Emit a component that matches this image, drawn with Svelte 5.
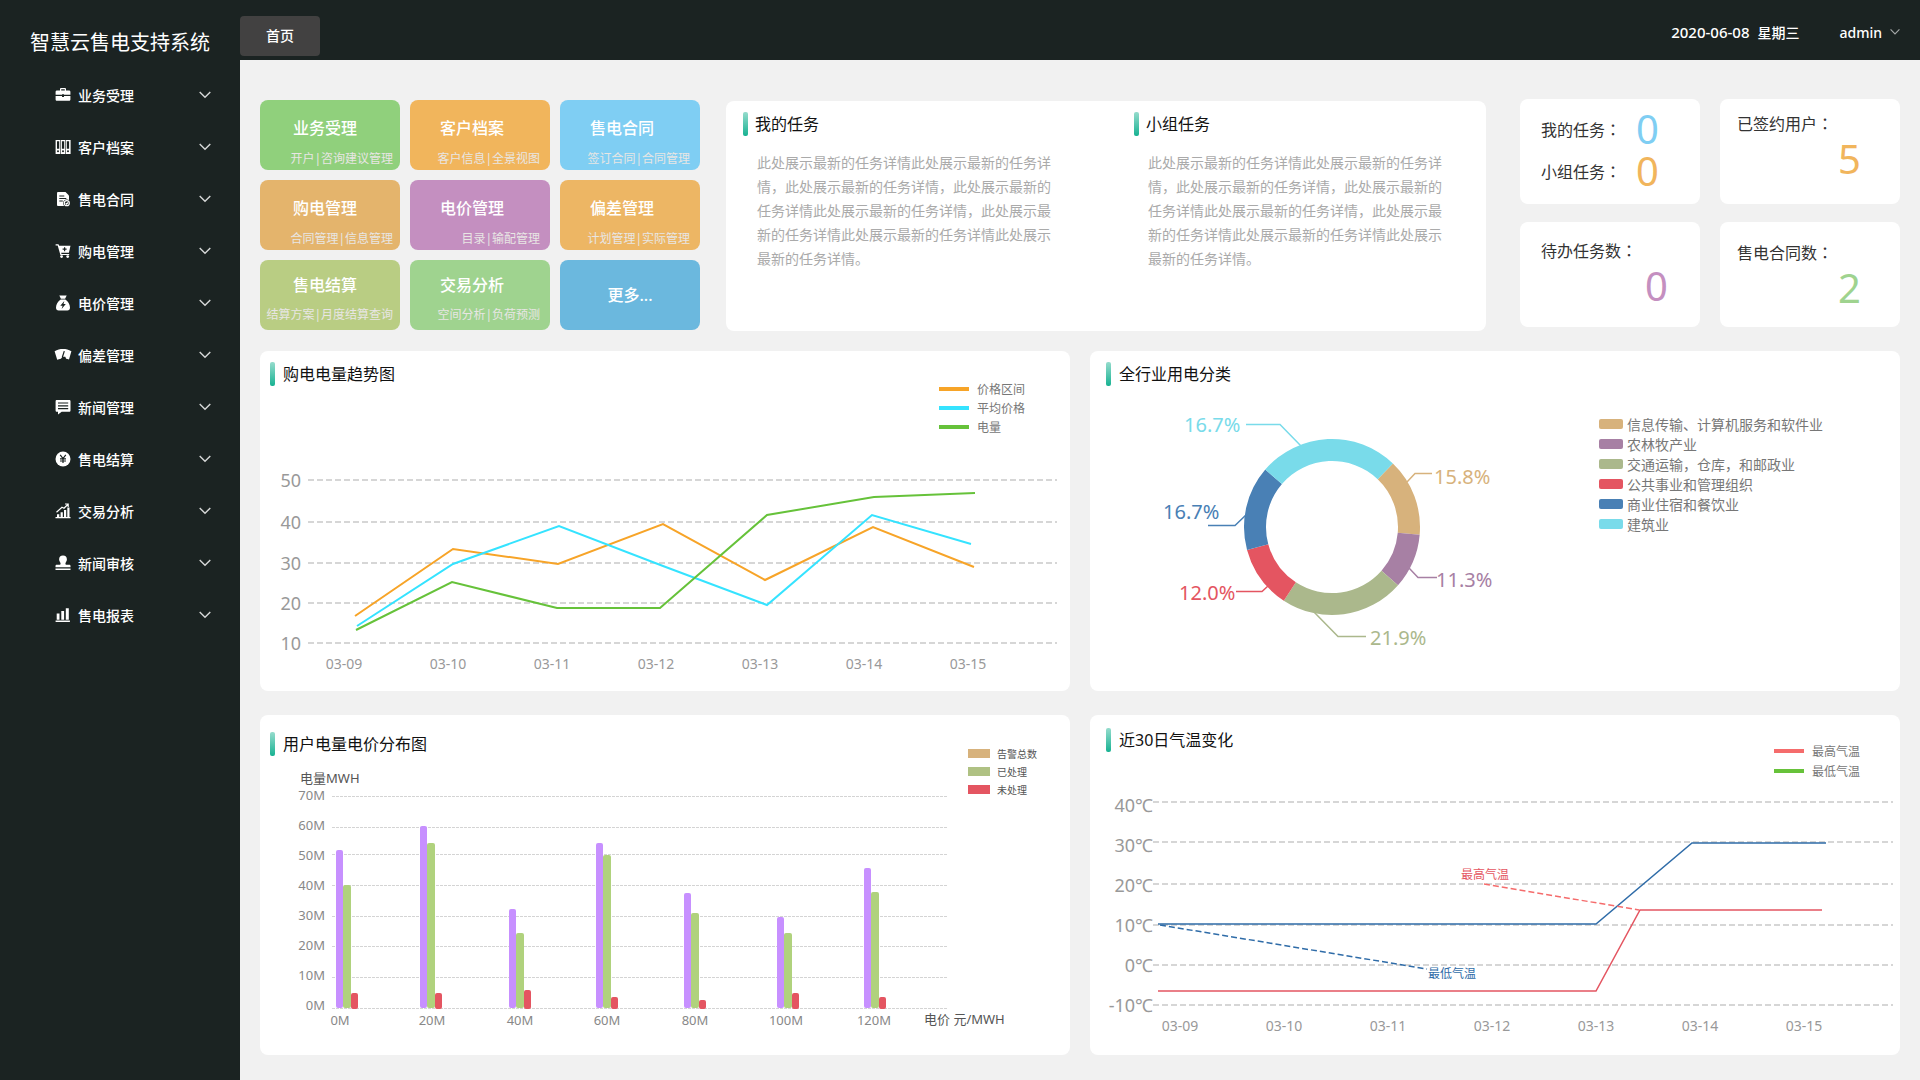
<script>
  const menu = [
    { icon: 'briefcase', label: '业务受理' },
    { icon: 'binders', label: '客户档案' },
    { icon: 'contract', label: '售电合同' },
    { icon: 'cart', label: '购电管理' },
    { icon: 'bag', label: '电价管理' },
    { icon: 'gauge', label: '偏差管理' },
    { icon: 'news', label: '新闻管理' },
    { icon: 'yen', label: '售电结算' },
    { icon: 'trend', label: '交易分析' },
    { icon: 'stamp', label: '新闻审核' },
    { icon: 'report', label: '售电报表' }
  ];

  const tiles = [
    { title: '业务受理', sub: '开户|咨询建议管理', tone: 'green' },
    { title: '客户档案', sub: '客户信息|全景视图', tone: 'orange' },
    { title: '售电合同', sub: '签订合同|合同管理', tone: 'sky' },
    { title: '购电管理', sub: '合同管理|信息管理', tone: 'sand' },
    { title: '电价管理', sub: '目录|输配管理', tone: 'purple' },
    { title: '偏差管理', sub: '计划管理|实际管理', tone: 'amber' },
    { title: '售电结算', sub: '结算方案|月度结算查询', tone: 'olive' },
    { title: '交易分析', sub: '空间分析|负荷预测', tone: 'mint' }
  ];

  const taskText =
    '此处展示最新的任务详情此处展示最新的任务详情，此处展示最新的任务详情，此处展示最新的任务详情此处展示最新的任务详情，此处展示最新的任务详情此处展示最新的任务详情此处展示最新的任务详情。';

  const days = ['03-09', '03-10', '03-11', '03-12', '03-13', '03-14', '03-15'];

  const trendRows = [
    { label: '50', y: 480 },
    { label: '40', y: 522 },
    { label: '30', y: 563 },
    { label: '20', y: 603 },
    { label: '10', y: 643 }
  ];
  const trendLines = [
    { name: '价格区间', color: '#f7a428', points: '355,616 453,549 558,564 663,524 765,580 873,527 974,567' },
    { name: '平均价格', color: '#35e3ff', points: '357,626 453,564 559,526 663,566 767,605 872,515 971,544' },
    { name: '电量', color: '#66c23a', points: '356,630 452,582 557,608 660,608 767,515 874,497 975,493' }
  ];

  const sectors = [
    { name: '信息传输、计算机服务和软件业', color: '#d7b27c', from: 43.8, to: 95, value: '15.8%', tx: 1434, ty: 484, lead: '1407,482 1415,473.5 1432,473.5' },
    { name: '农林牧产业', color: '#a780a4', from: 95, to: 131.4, value: '11.3%', tx: 1436, ty: 587, lead: '1409,568 1418,577.5 1437,577.5' },
    { name: '交通运输，仓库，和邮政业', color: '#abb88c', from: 131.4, to: 213.2, value: '21.9%', tx: 1370, ty: 645, lead: '1314,612 1338,636.5 1366,636.5' },
    { name: '公共事业和管理组织', color: '#e45561', from: 213.2, to: 254.9, value: '12.0%', tx: 1179, ty: 600, lead: '1236,591.5 1262,591.5 1268,586' },
    { name: '商业住宿和餐饮业', color: '#4980b5', from: 254.9, to: 310.7, value: '16.7%', tx: 1163, ty: 519, lead: '1208,525.5 1235,525.5 1247,514' },
    { name: '建筑业', color: '#79dbea', from: 310.7, to: 403.8, value: '16.7%', tx: 1184, ty: 432, lead: '1246,424.5 1280,424.5 1301,446' }
  ];

  function ring(from, to) {
    const at = (deg, r) => {
      const a = (deg * Math.PI) / 180;
      return `${(1332 + r * Math.sin(a)).toFixed(2)} ${(527 - r * Math.cos(a)).toFixed(2)}`;
    };
    return `M${at(from, 88)}A88 88 0 0 1 ${at(to, 88)}L${at(to, 66)}A66 66 0 0 0 ${at(from, 66)}Z`;
  }

  const barRows = [
    { label: '70M', y: 796.5 },
    { label: '60M', y: 827.5 },
    { label: '50M', y: 854.5 },
    { label: '40M', y: 885.5 },
    { label: '30M', y: 916.5 },
    { label: '20M', y: 946.5 },
    { label: '10M', y: 977.5 },
    { label: '0M', y: 1008.5 }
  ];
  const bars = [
    { label: '0M', x: 336, lx: 340, tops: [850, 885, 993] },
    { label: '20M', x: 420, lx: 432, tops: [826, 843, 993] },
    { label: '40M', x: 509, lx: 520, tops: [909, 933, 990] },
    { label: '60M', x: 596, lx: 607, tops: [843, 855, 997] },
    { label: '80M', x: 684, lx: 695, tops: [893, 913, 1000] },
    { label: '100M', x: 777, lx: 786, tops: [917, 933, 993] },
    { label: '120M', x: 864, lx: 874, tops: [868, 892, 997] }
  ];
  const barLegend = [
    { name: '告警总数', color: '#d7b27c' },
    { name: '已处理', color: '#afc183' },
    { name: '未处理', color: '#e45561' }
  ];

  const tempRows = [
    { label: '40℃', y: 802 },
    { label: '30℃', y: 842 },
    { label: '20℃', y: 884 },
    { label: '10℃', y: 925 },
    { label: '0℃', y: 965 },
    { label: '-10℃', y: 1005 }
  ];
  const tempLegend = [
    { name: '最高气温', color: '#f56c6c' },
    { name: '最低气温', color: '#67c23a' }
  ];
</script>

{#snippet chevron()}
  <svg class="chevron" viewBox="0 0 12 8" aria-hidden="true"><path d="M.7.9 6 6.3 11.3.9" /></svg>
{/snippet}

{#snippet icon(name)}
  <svg class="icon" viewBox="0 0 16 16" aria-hidden="true">
    {#if name === 'briefcase'}
      <path d="M2 3.4h3V2.2C5 1.4 5.500 1 6.200 1h3.600C10.500 1 11 1.400 11 2.200v1.200h3c.8 0 1.400.6 1.400 1.400v3H9V7.200H7v.6H.6v-3C.6 4 1.200 3.400 2 3.400zm4.200 0h3.600V2.200H6.200zM.6 8.900H7V10h2V8.900h6.400v3.500c0 .8-.6 1.300-1.400 1.300H2c-.8 0-1.400-.5-1.400-1.300z" fill-rule="evenodd" />
    {:else if name === 'binders'}
      <path d="M.6 1h15v14h-15zM2 2.300v7.500h2.200V2.300zm4.900 0v7.500h2.300V2.300zm4.900 0v7.500h2.300V2.300z" fill-rule="evenodd" />
      <path class="cut" d="M5.200 1h.6v14h-.6zM10.300 1h.6v14h-.6z" />
      <circle class="cut" cx="3" cy="12.300" r="1" /><circle class="cut" cx="8" cy="12.300" r="1" /><circle class="cut" cx="13" cy="12.300" r="1" />
    {:else if name === 'contract'}
      <path d="M3.300 1h7.200L14 4.400V15H3.300C2.500 15 2 14.500 2 13.700V2.300C2 1.500 2.500 1 3.300 1z" />
      <path class="cutline" d="M4.300 5h5M4.300 7.500h7M4.300 10h3.500" />
      <circle class="cut" cx="11.800" cy="12.200" r="3.600" />
      <circle class="line" cx="11.800" cy="12.200" r="2.500" />
      <path class="line" d="m10.800 12.200.8.9 1.500-1.600" />
    {:else if name === 'cart'}
      <path d="M.6 1.200h2.900l.7 1.600H15.500l-1.600 7H6.200l.3 1.100h7.700v1.200H5.400L2.700 2.400H.6z" />
      <circle cx="6.600" cy="13.600" r="1.400" /><circle cx="12.700" cy="13.600" r="1.400" />
      <path class="cutline" d="M9.600 4.200v4M7.600 6.200h4" />
    {:else if name === 'bag'}
      <path d="M4.300.5h7.400l-1.600 3.200H5.900zM5.700 4.600h4.600C13 6.500 15 9.500 15 12.500c0 2-.9 3-2.700 3H3.700C1.900 15.500 1 14.500 1 12.500c0-3 2-6 4.700-7.900z" />
      <path class="cut" d="M9.300 6 5.300 10.700h2.300l-1 3.200 4.200-4.800H8.500z" />
    {:else if name === 'gauge'}
      <path d="M-.4 4.300C2.300 2.600 5 2 8 2s5.700.6 8.400 2.300L14 12.600c-1.100-.6-2-.8-2.900-.9L10.300 9.700H7.500l-1.600 2c-1.400.2-2.700.5-3.700 1z" />
      <path class="cutline" d="m7.300 10.300 2-6.200" />
    {:else if name === 'news'}
      <path d="M1.900 1h12.300c.8 0 1.300.5 1.300 1.300v9.200c0 .8-.5 1.300-1.300 1.300H6.700L3 15.500v-2.700H1.900c-.8 0-1.300-.5-1.300-1.300V2.300C.6 1.500 1.100 1 1.900 1z" />
      <path class="cutline" d="M3 4h10.200M3 6.800h10.200M3 9.600h10.200" />
    {:else if name === 'yen'}
      <circle cx="8" cy="8" r="7.500" />
      <path class="cutline" d="M5.200 3.900 8 7.600l2.800-3.700M8 7.600V12M5 7.900h6M5 10h6" />
    {:else if name === 'trend'}
      <path d="M.5 14h15v1.200H.5zM2 11.300h2.300V14H2zM5.600 9.300h2.200V14H5.600zM9 7h2.200v7H9zM12.300 4.500h2.200V14h-2.200z" />
      <path class="line" d="M1.500 9.300 7 4.200l2 1L12.800 1.500M10 1h3.200v3" />
    {:else if name === 'stamp'}
      <path d="M8 .6a3.900 3.900 0 0 1 3.900 3.900c0 1.900-1.500 2.600-1.500 4.300 0 .6.300.9.900.9h2.900c.8 0 1.300.5 1.300 1.300v1.200H.5V11c0-.8.5-1.300 1.300-1.300h2.900c.6 0 .9-.3.9-.9 0-1.700-1.500-2.400-1.500-4.300A3.900 3.900 0 0 1 8 .6zM.5 13.500h15V15H.5z" />
    {:else}
      <path d="M.6 13.500h14.300V15H.6zM1.700 6.500h2.800v6.300H1.700zM6.300 4h2.800v8.800H6.300zM10.800 1.200h3v11.600h-3z" />
    {/if}
  </svg>
{/snippet}

<div class="app">
  <aside class="sidebar">
    <h1>智慧云售电支持系统</h1>
    <nav>
      {#each menu as item}
        <button class="menu-item" type="button">
          {@render icon(item.icon)}
          <span>{item.label}</span>
          {@render chevron()}
        </button>
      {/each}
    </nav>
  </aside>

  <div class="page">
    <header class="topbar">
      <a class="tab" href="#home">首页</a>
      <div class="session">
        <time datetime="2020-06-08">2020-06-08</time>
        <span class="weekday">星期三</span>
        <button class="user" type="button">admin {@render chevron()}</button>
      </div>
    </header>

    <main>
      <section class="overview">
        <div class="tiles">
          {#each tiles as tile}
            <a class="tile {tile.tone}" href="#module">
              <strong>{tile.title}</strong>
              <small>{tile.sub}</small>
            </a>
          {/each}
          <a class="tile more" href="#more"><strong>更多...</strong></a>
        </div>

        <div class="card tasks">
          {#each ['我的任务', '小组任务'] as name}
            <article>
              <h2>{name}</h2>
              <p>{taskText}</p>
            </article>
          {/each}
        </div>

        <div class="stats">
          <div class="card stat pair">
            <div><span>我的任务<i>：</i></span><b class="c-sky">0</b></div>
            <div><span>小组任务<i>：</i></span><b class="c-amber">0</b></div>
          </div>
          <div class="card stat signed">
            <span>已签约用户<i>：</i></span><b class="c-amber">5</b>
          </div>
          <div class="card stat todo">
            <span>待办任务数<i>：</i></span><b class="c-purple">0</b>
          </div>
          <div class="card stat deals">
            <span>售电合同数<i>：</i></span><b class="c-green">2</b>
          </div>
        </div>
      </section>

      <section class="charts">
        <div class="card panel trend">
          <div class="head">
            <h2>购电电量趋势图</h2>
            <ul class="legend lines">
              {#each trendLines as line}
                <li><svg viewBox="0 0 30 4"><rect width="30" height="4" fill={line.color} /></svg>{line.name}</li>
              {/each}
            </ul>
          </div>
          <svg class="plot" viewBox="260 445 810 246" role="img" aria-label="购电电量趋势图">
            {#each trendRows as row}
              <line class="grid" x1="308" x2="1057" y1={row.y} y2={row.y} />
              <text class="big" x="301" y={row.y + 7} text-anchor="end">{row.label}</text>
            {/each}
            {#each days as day, i}
              <text class="day" x={344 + i * 104} y="669" text-anchor="middle">{day}</text>
            {/each}
            {#each trendLines as line}
              <polyline points={line.points} stroke={line.color} stroke-width="2" />
            {/each}
          </svg>
        </div>

        <div class="card panel share">
          <div class="head"><h2>全行业用电分类</h2></div>
          <div class="split">
            <svg class="donut" viewBox="1090 395 509 296" role="img" aria-label="全行业用电分类">
              {#each sectors as s}
                <path d={ring(s.from, s.to)} fill={s.color} />
                <polyline points={s.lead} stroke={s.color} stroke-width="1.5" />
                <text class="pct" x={s.tx} y={s.ty} fill={s.color}>{s.value}</text>
              {/each}
            </svg>
            <ul class="legend sectors">
              {#each sectors as s}
                <li><svg viewBox="0 0 24 10"><rect width="24" height="10" rx="2" fill={s.color} /></svg>{s.name}</li>
              {/each}
            </ul>
          </div>
        </div>

        <div class="card panel spread">
          <div class="head">
            <h2>用户电量电价分布图</h2>
            <ul class="legend boxes">
              {#each barLegend as item}
                <li><svg viewBox="0 0 22 9"><rect width="22" height="9" fill={item.color} /></svg>{item.name}</li>
              {/each}
            </ul>
          </div>
          <svg class="plot" viewBox="260 765 810 290" role="img" aria-label="用户电量电价分布图">
            <text class="axis" x="300" y="783">电量MWH</text>
            {#each barRows as row, i}
              <line class="dots" x1="332" x2="948" y1={row.y} y2={row.y} />
              <text class="tick" x="325" y={800 + i * 30} text-anchor="end">{row.label}</text>
            {/each}
            {#each bars as b}
              <rect x={b.x} y={b.tops[0]} width="7" height={1008 - b.tops[0]} rx="2" fill="#c790ff" />
              <rect x={b.x + 7} y={b.tops[1]} width="8" height={1008 - b.tops[1]} rx="2" fill="#b0d27d" />
              <rect x={b.x + 15} y={b.tops[2]} width="7" height={1009 - b.tops[2]} rx="2" fill="#e45561" />
              <text class="tick" x={b.lx} y="1025" text-anchor="middle">{b.label}</text>
            {/each}
            <text class="axis" x="924" y="1024">电价 元/MWH</text>
          </svg>
        </div>

        <div class="card panel temp">
          <div class="head">
            <h2>近30日气温变化</h2>
            <ul class="legend lines">
              {#each tempLegend as item}
                <li><svg viewBox="0 0 30 4"><rect width="30" height="4" fill={item.color} /></svg>{item.name}</li>
              {/each}
            </ul>
          </div>
          <svg class="plot" viewBox="1090 785 810 270" role="img" aria-label="近30日气温变化">
            {#each tempRows as row, i}
              <line class="grid" x1="1153" x2="1893" y1={row.y} y2={row.y} />
              <text class="big" x="1153" y={812 + i * 40} text-anchor="end">{row.label}</text>
            {/each}
            {#each days as day, i}
              <text class="day" x={1180 + i * 104} y="1031" text-anchor="middle">{day}</text>
            {/each}
            <polyline points="1158,924 1596,924 1692,843 1826,843" stroke="#2f6ca8" stroke-width="1.5" />
            <polyline points="1158,991 1596,991 1640,910 1822,910" stroke="#e45561" stroke-width="1.5" />
            <polyline class="hint" points="1484,884 1639,910" stroke="#f56c6c" />
            <polyline class="hint" points="1160,925 1427,969" stroke="#2f6ca8" />
            <text class="note" x="1461" y="879" fill="#e45561">最高气温</text>
            <text class="note" x="1428" y="978" fill="#2f6ca8">最低气温</text>
          </svg>
        </div>
      </section>
    </main>
  </div>
</div>

<style>
  :global(body) {
    background: #f1f1f1;
  }
  .app {
    display: flex;
    min-height: 100vh;
    font-family: 'Noto Sans', 'Noto Sans CJK SC', sans-serif;
    font-size: 14px;
    color: #333;
  }
  h1,
  h2,
  p,
  ul {
    margin: 0;
    padding: 0;
    font-weight: 400;
  }
  ul {
    list-style: none;
  }
  a {
    color: inherit;
    text-decoration: none;
  }
  button {
    border: 0;
    background: none;
    font: inherit;
    color: inherit;
    cursor: pointer;
  }
  svg {
    display: block;
    flex: none;
  }

  .sidebar {
    flex: 0 0 240px;
    background: #1b2322;
    color: #fff;
  }
  h1 {
    padding: 28px 0 11px 30px;
    font-size: 20px;
    line-height: 30px;
    white-space: nowrap;
  }
  .menu-item {
    display: flex;
    align-items: center;
    width: 100%;
    height: 52px;
    padding: 0 29px 0 55px;
    font-weight: 500;
  }
  .icon {
    width: 16px;
    height: 16px;
    margin-right: 7px;
    fill: #fff;
    overflow: visible;
  }
  .icon .cut {
    fill: #1b2322;
  }
  .icon .cutline {
    fill: none;
    stroke: #1b2322;
    stroke-width: 1.2;
  }
  .icon .line {
    fill: none;
    stroke: #fff;
    stroke-width: 1.2;
  }
  .chevron {
    width: 12px;
    height: 8px;
    margin-left: auto;
    fill: none;
    stroke: #d5d7d7;
    stroke-width: 1.4;
  }

  .page {
    flex: 1;
    min-width: 0;
  }
  .topbar {
    display: flex;
    justify-content: space-between;
    align-items: flex-end;
    height: 60px;
    background: #1b2322;
    color: #fff;
  }
  .tab {
    width: 80px;
    margin-bottom: 4px;
    border-radius: 4px;
    background: #424141;
    line-height: 40px;
    text-align: center;
    font-weight: 500;
  }
  .session {
    display: flex;
    align-items: center;
    height: 56px;
    padding-right: 20px;
    font-weight: 500;
  }
  time {
    font-size: 15px;
    margin-right: 8px;
  }
  .weekday {
    margin-right: 40px;
  }
  .user {
    display: flex;
    align-items: center;
    gap: 8px;
    padding: 0;
  }
  .user .chevron {
    width: 10px;
    stroke: #a5a8a8;
  }

  main {
    padding: 39px 20px 25px;
  }
  .card {
    border-radius: 8px;
    background: #fff;
  }
  .overview {
    display: grid;
    grid-template-columns: minmax(0, 440fr) minmax(0, 760fr) minmax(0, 388fr);
    column-gap: 26px;
    align-items: start;
  }
  .tiles {
    display: grid;
    grid-template-columns: repeat(3, minmax(0, 1fr));
    grid-auto-rows: 70px;
    gap: 10px;
    padding-top: 1px;
  }
  .tile {
    display: flex;
    flex-direction: column;
    justify-content: space-between;
    box-sizing: border-box;
    padding: 16px 10px 2px 0;
    border-radius: 8px;
    color: #fff;
    white-space: nowrap;
  }
  .tile:nth-child(3n + 1) {
    padding-right: 7px;
  }
  .tile:nth-child(n + 7) {
    padding-top: 13px;
    padding-bottom: 6px;
  }
  .tile strong {
    padding-left: 30px;
    font-size: 16px;
    font-weight: 500;
    line-height: 24px;
  }
  .tile:nth-child(3n + 1) strong {
    padding-left: 33px;
  }
  .tile small {
    align-self: flex-end;
    font-size: 12px;
    line-height: 18px;
    color: #e8e6e4;
  }
  .tile.more {
    justify-content: center;
    align-items: center;
    padding: 0;
  }
  .tile.more strong {
    padding: 0;
  }
  .green {
    background: #90d07c;
  }
  .orange {
    background: #f1b55c;
  }
  .sky {
    background: #7fcef3;
  }
  .sand {
    background: #e4b46c;
  }
  .purple {
    background: #c48fc0;
  }
  .amber {
    background: #edb664;
  }
  .olive {
    background: #b9cd83;
  }
  .mint {
    background: #9fd38f;
  }
  .more {
    background: #6bb8de;
  }

  h2 {
    display: flex;
    align-items: center;
    gap: 8px;
    font-size: 16px;
    line-height: 24px;
    color: #111;
    white-space: nowrap;
  }
  h2::before {
    content: '';
    width: 5px;
    height: 24px;
    border-radius: 2px;
    background: linear-gradient(#96dccd, #17b292);
  }
  .tasks {
    display: grid;
    grid-template-columns: 1fr 1fr;
    column-gap: 39px;
    min-height: 219px;
    margin-top: 2px;
    padding: 11px 0 0 17px;
  }
  .tasks h2 {
    gap: 7px;
  }
  .tasks p {
    max-width: 296px;
    padding: 15px 0 0 14px;
    line-height: 24px;
    color: #aaa;
  }

  .stats {
    display: grid;
    grid-template-columns: 1fr 1fr;
    gap: 18px 20px;
    padding-left: 8px;
  }
  .stat {
    display: flex;
    flex-direction: column;
    box-sizing: border-box;
    min-height: 105px;
    font-size: 16px;
    line-height: 24px;
    white-space: nowrap;
  }
  .stat i {
    font-family: 'Noto Sans CJK JP', sans-serif;
    font-style: normal;
  }
  .stat b {
    font-size: 40px;
    font-weight: 400;
    line-height: 40px;
  }
  .pair {
    justify-content: center;
    padding: 0 0 3px 21px;
  }
  .pair div {
    display: flex;
    align-items: center;
    height: 42px;
  }
  .pair b {
    margin-left: 15px;
  }
  .signed,
  .deals {
    padding: 12px 39px 0 17px;
  }
  .todo {
    padding: 16px 32px 0 21px;
  }
  .deals {
    padding-top: 18px;
  }
  .stat > b {
    align-self: flex-end;
    margin-top: 3px;
  }
  .c-sky {
    color: #7fcef3;
  }
  .c-amber {
    color: #f1b55c;
  }
  .c-purple {
    color: #c48fc0;
  }
  .c-green {
    color: #9fd38f;
  }

  .charts {
    display: grid;
    grid-template-columns: minmax(0, 1fr) minmax(0, 1fr);
    gap: 24px 20px;
    padding-top: 20px;
  }
  .panel {
    overflow: hidden;
  }
  .head {
    display: flex;
    justify-content: space-between;
    align-items: flex-start;
    padding: 11px 45px 0 10px;
    box-sizing: border-box;
  }
  .trend .head {
    height: 94px;
  }
  .share .head {
    height: 44px;
    padding-left: 16px;
  }
  .spread .head {
    height: 50px;
    padding: 17px 33px 0 10px;
  }
  .temp .head {
    height: 70px;
    padding: 13px 40px 0 16px;
  }
  .legend li {
    display: flex;
    align-items: center;
    white-space: nowrap;
    color: #777;
  }
  .lines {
    padding-top: 17px;
    font-size: 12px;
  }
  .lines li {
    height: 19px;
  }
  .temp .lines {
    padding-top: 13px;
  }
  .temp .lines li {
    height: 20px;
  }
  .lines svg {
    width: 30px;
    height: 4px;
    margin-right: 8px;
  }
  .split {
    display: flex;
    align-items: flex-start;
  }
  .donut {
    flex: 509 1 0;
    min-width: 0;
  }
  .sectors {
    flex: 301 1 0;
    padding-top: 19px;
    font-size: 14px;
  }
  .sectors li {
    height: 20px;
  }
  .sectors svg {
    width: 24px;
    height: 10px;
    margin-right: 4px;
  }
  .boxes {
    padding-top: 12px;
    font-size: 10px;
  }
  .boxes li {
    height: 18px;
    color: #555;
  }
  .boxes svg {
    width: 22px;
    height: 9px;
    margin-right: 7px;
  }
  .plot {
    width: 100%;
  }
  polyline {
    fill: none;
  }
  .grid {
    stroke: #c9c9c9;
    stroke-width: 1.5;
    stroke-dasharray: 6 3;
  }
  .dots {
    stroke: #d4d4d4;
    stroke-dasharray: 3 1;
  }
  .big {
    font-size: 18px;
    fill: #999;
  }
  .day {
    font-size: 14px;
    fill: #999;
  }
  .pct {
    font-size: 20px;
  }
  .tick {
    font-size: 13px;
    fill: #888;
  }
  .axis {
    font-size: 13px;
    fill: #555;
  }
  .note {
    font-size: 12px;
  }
  .hint {
    stroke-width: 1.5;
    stroke-dasharray: 6 3;
  }
</style>
